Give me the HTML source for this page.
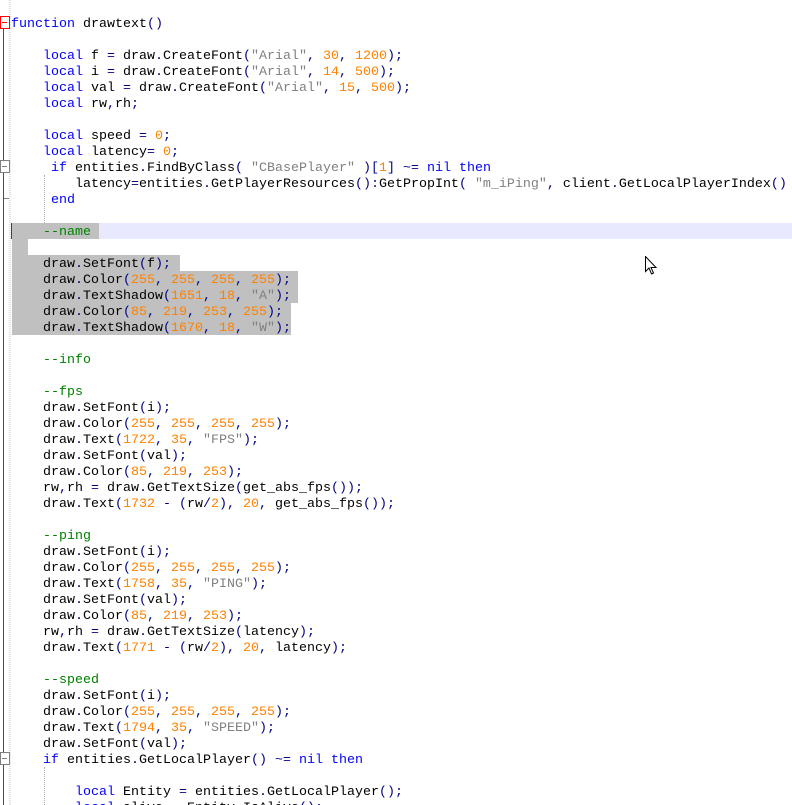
<!DOCTYPE html>
<html><head><meta charset="utf-8"><style>
html,body{margin:0;padding:0;background:#fff;width:792px;height:805px;overflow:hidden;position:relative}
.g{position:absolute;left:9px;top:0;width:2px;height:805px;background:repeating-linear-gradient(0deg,#e0e0e0 0 1px,#fff 1px 2px)}
.bg{position:absolute;height:16px}
pre{position:absolute;left:11px;top:17px;margin:0;font-family:"Liberation Mono",monospace;font-size:13.33px;line-height:16px;color:#000}
.k{color:#0000ff}.s{color:#808080}.n{color:#ff8000}.c{color:#008000}.o{color:#000080}
.guide{position:absolute;width:0;border-left:1px dotted #b0b0b0}
</style></head><body>
<div class="g"></div>
<div class="bg" style="left:11px;top:223px;width:781px;background:#e8e8ff"></div>
<div class="bg" style="left:12px;top:223px;width:87px;background:#c0c0c0"></div>
<div class="bg" style="left:11px;top:223px;width:1px;background:#8000ff"></div>
<div class="bg" style="left:12px;top:239px;width:16px;background:#c0c0c0"></div>
<div class="bg" style="left:12px;top:255px;width:168px;background:#c0c0c0"></div>
<div class="bg" style="left:12px;top:271px;width:286px;background:#c0c0c0"></div>
<div class="bg" style="left:12px;top:287px;width:286px;background:#c0c0c0"></div>
<div class="bg" style="left:12px;top:303px;width:279px;background:#c0c0c0"></div>
<div class="bg" style="left:12px;top:319px;width:279px;background:#c0c0c0"></div>
<div class="guide" style="left:44px;top:175px;height:48px"></div>
<div class="guide" style="left:44px;top:767px;height:38px"></div>
<div style="position:absolute;left:3px;top:28px;width:1px;height:777px;background:#f00"></div>
<div style="position:absolute;left:0;top:16px;width:8px;height:11px;border:1px solid #f00;background:#fff"></div>
<div style="position:absolute;left:2px;top:22px;width:5px;height:1px;background:#f00"></div>
<div style="position:absolute;left:0;top:160px;width:8px;height:11px;border:1px solid #808080;background:#fff"></div>
<div style="position:absolute;left:2px;top:166px;width:5px;height:1px;background:#808080"></div>
<div style="position:absolute;left:4px;top:198px;width:5px;height:1px;background:#808080"></div>
<div style="position:absolute;left:0;top:752px;width:8px;height:11px;border:1px solid #808080;background:#fff"></div>
<div style="position:absolute;left:2px;top:758px;width:5px;height:1px;background:#808080"></div>
<pre><span class="k">function</span> drawtext<span class="o">()</span>

    <span class="k">local</span> f <span class="o">=</span> draw<span class="o">.</span>CreateFont<span class="o">(</span><span class="s">"Arial"</span><span class="o">,</span> <span class="n">30</span><span class="o">,</span> <span class="n">1200</span><span class="o">);</span>
    <span class="k">local</span> i <span class="o">=</span> draw<span class="o">.</span>CreateFont<span class="o">(</span><span class="s">"Arial"</span><span class="o">,</span> <span class="n">14</span><span class="o">,</span> <span class="n">500</span><span class="o">);</span>
    <span class="k">local</span> val <span class="o">=</span> draw<span class="o">.</span>CreateFont<span class="o">(</span><span class="s">"Arial"</span><span class="o">,</span> <span class="n">15</span><span class="o">,</span> <span class="n">500</span><span class="o">);</span>
    <span class="k">local</span> rw<span class="o">,</span>rh<span class="o">;</span>

    <span class="k">local</span> speed <span class="o">=</span> <span class="n">0</span><span class="o">;</span>
    <span class="k">local</span> latency<span class="o">=</span> <span class="n">0</span><span class="o">;</span>
     <span class="k">if</span> entities<span class="o">.</span>FindByClass<span class="o">(</span> <span class="s">"CBasePlayer"</span> <span class="o">)[</span><span class="n">1</span><span class="o">]</span> <span class="o">~=</span> <span class="k">nil</span> <span class="k">then</span>
        latency<span class="o">=</span>entities<span class="o">.</span>GetPlayerResources<span class="o">():</span>GetPropInt<span class="o">(</span> <span class="s">"m_iPing"</span><span class="o">,</span> client<span class="o">.</span>GetLocalPlayerIndex<span class="o">()</span>
     <span class="k">end</span>

    <span class="c">--name</span>

    draw<span class="o">.</span>SetFont<span class="o">(</span>f<span class="o">);</span>
    draw<span class="o">.</span>Color<span class="o">(</span><span class="n">255</span><span class="o">,</span> <span class="n">255</span><span class="o">,</span> <span class="n">255</span><span class="o">,</span> <span class="n">255</span><span class="o">);</span>
    draw<span class="o">.</span>TextShadow<span class="o">(</span><span class="n">1651</span><span class="o">,</span> <span class="n">18</span><span class="o">,</span> <span class="s">"A"</span><span class="o">);</span>
    draw<span class="o">.</span>Color<span class="o">(</span><span class="n">85</span><span class="o">,</span> <span class="n">219</span><span class="o">,</span> <span class="n">253</span><span class="o">,</span> <span class="n">255</span><span class="o">);</span>
    draw<span class="o">.</span>TextShadow<span class="o">(</span><span class="n">1670</span><span class="o">,</span> <span class="n">18</span><span class="o">,</span> <span class="s">"W"</span><span class="o">);</span>

    <span class="c">--info</span>

    <span class="c">--fps</span>
    draw<span class="o">.</span>SetFont<span class="o">(</span>i<span class="o">);</span>
    draw<span class="o">.</span>Color<span class="o">(</span><span class="n">255</span><span class="o">,</span> <span class="n">255</span><span class="o">,</span> <span class="n">255</span><span class="o">,</span> <span class="n">255</span><span class="o">);</span>
    draw<span class="o">.</span>Text<span class="o">(</span><span class="n">1722</span><span class="o">,</span> <span class="n">35</span><span class="o">,</span> <span class="s">"FPS"</span><span class="o">);</span>
    draw<span class="o">.</span>SetFont<span class="o">(</span>val<span class="o">);</span>
    draw<span class="o">.</span>Color<span class="o">(</span><span class="n">85</span><span class="o">,</span> <span class="n">219</span><span class="o">,</span> <span class="n">253</span><span class="o">);</span>
    rw<span class="o">,</span>rh <span class="o">=</span> draw<span class="o">.</span>GetTextSize<span class="o">(</span>get_abs_fps<span class="o">());</span>
    draw<span class="o">.</span>Text<span class="o">(</span><span class="n">1732</span> <span class="o">-</span> <span class="o">(</span>rw<span class="o">/</span><span class="n">2</span><span class="o">),</span> <span class="n">20</span><span class="o">,</span> get_abs_fps<span class="o">());</span>

    <span class="c">--ping</span>
    draw<span class="o">.</span>SetFont<span class="o">(</span>i<span class="o">);</span>
    draw<span class="o">.</span>Color<span class="o">(</span><span class="n">255</span><span class="o">,</span> <span class="n">255</span><span class="o">,</span> <span class="n">255</span><span class="o">,</span> <span class="n">255</span><span class="o">);</span>
    draw<span class="o">.</span>Text<span class="o">(</span><span class="n">1758</span><span class="o">,</span> <span class="n">35</span><span class="o">,</span> <span class="s">"PING"</span><span class="o">);</span>
    draw<span class="o">.</span>SetFont<span class="o">(</span>val<span class="o">);</span>
    draw<span class="o">.</span>Color<span class="o">(</span><span class="n">85</span><span class="o">,</span> <span class="n">219</span><span class="o">,</span> <span class="n">253</span><span class="o">);</span>
    rw<span class="o">,</span>rh <span class="o">=</span> draw<span class="o">.</span>GetTextSize<span class="o">(</span>latency<span class="o">);</span>
    draw<span class="o">.</span>Text<span class="o">(</span><span class="n">1771</span> <span class="o">-</span> <span class="o">(</span>rw<span class="o">/</span><span class="n">2</span><span class="o">),</span> <span class="n">20</span><span class="o">,</span> latency<span class="o">);</span>

    <span class="c">--speed</span>
    draw<span class="o">.</span>SetFont<span class="o">(</span>i<span class="o">);</span>
    draw<span class="o">.</span>Color<span class="o">(</span><span class="n">255</span><span class="o">,</span> <span class="n">255</span><span class="o">,</span> <span class="n">255</span><span class="o">,</span> <span class="n">255</span><span class="o">);</span>
    draw<span class="o">.</span>Text<span class="o">(</span><span class="n">1794</span><span class="o">,</span> <span class="n">35</span><span class="o">,</span> <span class="s">"SPEED"</span><span class="o">);</span>
    draw<span class="o">.</span>SetFont<span class="o">(</span>val<span class="o">);</span>
    <span class="k">if</span> entities<span class="o">.</span>GetLocalPlayer<span class="o">()</span> <span class="o">~=</span> <span class="k">nil</span> <span class="k">then</span>

        <span class="k">local</span> Entity <span class="o">=</span> entities<span class="o">.</span>GetLocalPlayer<span class="o">();</span>
        <span class="k">local</span> alive <span class="o">=</span> Entity<span class="o">.</span>IsAlive<span class="o">();</span>
</pre>
<svg style="position:absolute;left:645px;top:256px" width="13" height="20" viewBox="0 0 13 20"><path d="M0.5 0.5 L0.5 15.5 L4 12 L6.5 18 L8.5 17 L6 11.5 L11 11.5 Z" fill="#fff" stroke="#000" stroke-width="1"/></svg>
</body></html>
